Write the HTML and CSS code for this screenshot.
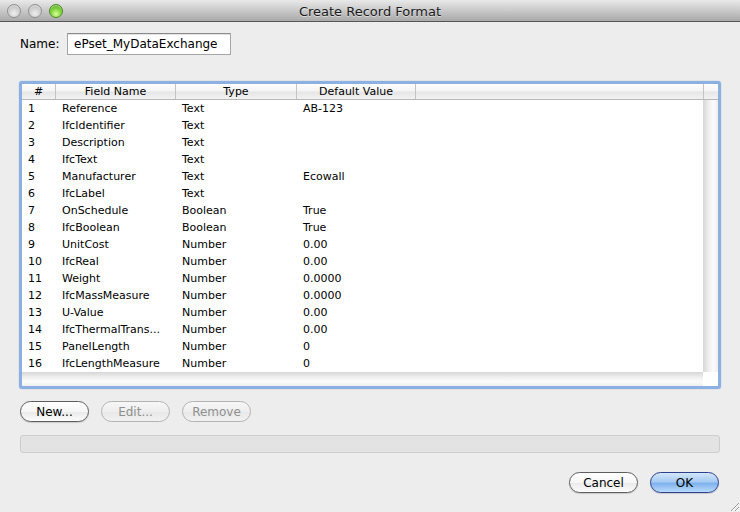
FILE: index.html
```html
<!DOCTYPE html>
<html>
<head>
<meta charset="utf-8">
<link rel="stylesheet" href="styles.css">
</head>
<body>
<div class="window">
  <div class="titlebar">
    <div class="lights">
      <span class="light"></span>
      <span class="light"></span>
      <span class="light green"></span>
    </div>
    <div class="title">Create Record Format</div>
  </div>
  <div class="content">
    <div class="name-row">
      <label class="name-label">Name:</label>
      <div class="name-input">ePset_MyDataExchange</div>
    </div>
    <div class="table-ring">
      <div class="table">
        <div class="thead">
          <div class="th">#</div>
          <div class="th">Field Name</div>
          <div class="th">Type</div>
          <div class="th">Default Value</div>
          <div class="th"></div>
          <div class="th corner"></div>
        </div>
        <div class="tbody">
          <div class="rows">
            <div class="tr"><span>1</span><span>Reference</span><span>Text</span><span>AB-123</span></div>
            <div class="tr"><span>2</span><span>IfcIdentifier</span><span>Text</span><span></span></div>
            <div class="tr"><span>3</span><span>Description</span><span>Text</span><span></span></div>
            <div class="tr"><span>4</span><span>IfcText</span><span>Text</span><span></span></div>
            <div class="tr"><span>5</span><span>Manufacturer</span><span>Text</span><span>Ecowall</span></div>
            <div class="tr"><span>6</span><span>IfcLabel</span><span>Text</span><span></span></div>
            <div class="tr"><span>7</span><span>OnSchedule</span><span>Boolean</span><span>True</span></div>
            <div class="tr"><span>8</span><span>IfcBoolean</span><span>Boolean</span><span>True</span></div>
            <div class="tr"><span>9</span><span>UnitCost</span><span>Number</span><span>0.00</span></div>
            <div class="tr"><span>10</span><span>IfcReal</span><span>Number</span><span>0.00</span></div>
            <div class="tr"><span>11</span><span>Weight</span><span>Number</span><span>0.0000</span></div>
            <div class="tr"><span>12</span><span>IfcMassMeasure</span><span>Number</span><span>0.0000</span></div>
            <div class="tr"><span>13</span><span>U-Value</span><span>Number</span><span>0.00</span></div>
            <div class="tr"><span>14</span><span>IfcThermalTrans...</span><span>Number</span><span>0.00</span></div>
            <div class="tr"><span>15</span><span>PanelLength</span><span>Number</span><span>0</span></div>
            <div class="tr"><span>16</span><span>IfcLengthMeasure</span><span>Number</span><span>0</span></div>
          </div>
          <div class="vscroll"></div>
        </div>
        <div class="hscroll-row">
          <div class="hscroll"></div>
          <div class="scroll-corner"></div>
        </div>
      </div>
    </div>
    <div class="btn-row">
      <button class="btn">New...</button>
      <button class="btn disabled">Edit...</button>
      <button class="btn disabled">Remove</button>
    </div>
    <div class="progress"></div>
    <div class="footer">
      <button class="btn">Cancel</button>
      <button class="btn primary">OK</button>
    </div>
  </div>
  <svg class="grip" width="12" height="12" viewBox="0 0 12 12">
    <path d="M11 3 L3 11 M11 7 L7 11" stroke="#9a9a9a" stroke-width="1"/>
    <path d="M11 4 L4 11 M11 8 L8 11" stroke="#ffffff" stroke-width="1"/>
  </svg>
</div>
</body>
</html>
```

FILE: styles.css
```css
* { box-sizing: border-box; }
html, body {
  margin: 0;
  padding: 0;
  width: 740px;
  height: 512px;
  overflow: hidden;
  background: #ededed;
  font-family: "Lucida Grande", "DejaVu Sans", "Noto Sans", sans-serif;
  font-size: 11px;
  color: #000;
}
.window {
  position: relative;
  width: 740px;
  height: 512px;
}
.titlebar {
  position: relative;
  height: 22px;
  background: linear-gradient(#e9e9e9, #c9c9c9 50%, #a9a9a9);
  border-bottom: 1px solid #575757;
  display: flex;
  align-items: center;
  justify-content: center;
}
.lights {
  position: absolute;
  left: 7px;
  top: 4px;
  display: flex;
  gap: 7px;
}
.light {
  width: 14px;
  height: 14px;
  border-radius: 50%;
  background: radial-gradient(circle at 50% 70%, #eeeeee, #cdcdcd 55%, #a9a9a9);
  border: 1px solid #8f8f8f;
  box-shadow: inset 0 1px 1px rgba(255,255,255,0.6);
}
.light.green {
  background: radial-gradient(circle at 50% 75%, #d9ff9a, #7ed23b 50%, #3f8f10);
  border-color: #4c8a1e;
}
.title {
  font-size: 13px;
  color: #1a1a1a;
  text-shadow: 0 1px 0 rgba(255,255,255,0.5);
  margin-top: 1px;
}
.content {
  padding: 11px 19px 0 19px;
  display: flex;
  flex-direction: column;
}
.name-row {
  display: flex;
  align-items: center;
  padding-left: 1px;
  height: 22px;
}
.name-label {
  font-size: 12px;
  width: 47px;
}
.name-input {
  width: 164px;
  height: 22px;
  background: #fff;
  border: 1px solid #a5a5a5;
  border-top-color: #8a8a8a;
  box-shadow: inset 0 1px 0 #e3e3e3;
  font-size: 12px;
  padding: 3px 0 0 6px;
}
.table-ring {
  margin-top: 26px;
  width: 702px;
  height: 308px;
  border: 3px solid #8db0e3;
  border-radius: 3px;
  box-shadow: 0 0 1px #6e95d0;
}
.table {
  width: 100%;
  height: 100%;
  background: #fff;
  display: flex;
  flex-direction: column;
}
.thead {
  display: grid;
  grid-template-columns: 34px 120px 121px 119px 288px 1fr;
  height: 16px;
  background: linear-gradient(#ffffff, #f4f4f4 45%, #e6e6e6 55%, #f2f2f2);
  border-bottom: 1px solid #b8b8b8;
}
.th {
  text-align: center;
  line-height: 15px;
  border-right: 1px solid #c4c4c4;
}
.th.corner { border-right: none; }
.tbody {
  display: flex;
  height: 272px;
}
.rows {
  flex: 1;
}
.tr {
  display: grid;
  grid-template-columns: 34px 120px 121px 119px;
  height: 17px;
  line-height: 17px;
}
.tr span { padding-left: 6px; }
.vscroll {
  width: 15px;
  background: linear-gradient(to right, #d6d6d6, #f0f0f0 40%, #fbfbfb 70%, #eeeeee);
}
.hscroll-row {
  display: flex;
  height: 14px;
}
.hscroll {
  flex: 1;
  background: linear-gradient(#d6d6d6, #f0f0f0 40%, #fbfbfb 70%, #eeeeee);
}
.scroll-corner {
  width: 15px;
  background: #fff;
}
.btn-row {
  display: flex;
  gap: 12px;
  margin-top: 12px;
  padding-left: 1px;
}
.btn {
  width: 69px;
  height: 21px;
  border-radius: 11px;
  border: 1px solid #5e5e5e;
  background: linear-gradient(#ffffff, #f6f6f6 50%, #e9e9e9 51%, #fcfcfc);
  font-family: inherit;
  font-size: 12px;
  color: #000;
  padding: 0;
  box-shadow: 0 1px 1px rgba(0,0,0,0.15);
}
.btn.disabled {
  border-color: #b3b3b3;
  color: #8f8f8f;
  background: linear-gradient(#f7f7f7, #eeeeee 50%, #e7e7e7 51%, #f2f2f2);
  box-shadow: none;
}
.btn.primary {
  border-color: #2e3f8f;
  background: linear-gradient(#d3e6fb, #a7cbf2 45%, #7fb2ec 55%, #b8dafc);
}
.progress {
  margin-top: 13px;
  margin-left: 1px;
  width: 700px;
  height: 18px;
  background: #e3e3e3;
  border: 1px solid #cdcdcd;
  border-radius: 3px;
}
.footer {
  display: flex;
  justify-content: flex-end;
  gap: 12px;
  margin-top: 19px;
  padding-right: 2px;
}
.grip {
  position: absolute;
  right: 0;
  bottom: 0;
}
```
